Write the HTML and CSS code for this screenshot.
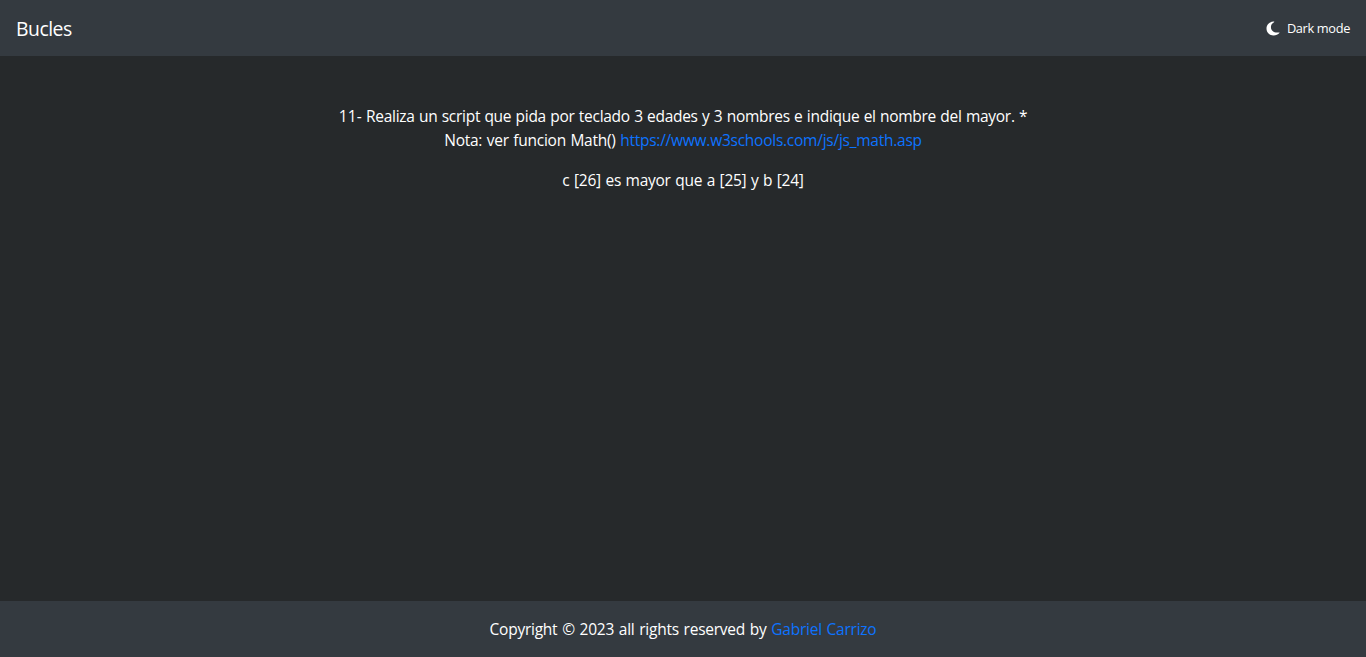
FILE: index.html
```html
<!DOCTYPE html>
<html lang="es">
<head>
<meta charset="utf-8">
<title>Bucles</title>
<link rel="stylesheet" href="styles.css">
</head>
<body>
<nav class="navbar">
  <a class="brand">Bucles</a>
  <button class="mode" type="button">
    <svg class="moon" viewBox="0 0 14 15" aria-hidden="true"><path d="M7.600.4C3.300.7.500 3.700.500 7.500c0 4 3.200 7.100 7.200 7.100 2.300 0 4.300-.9 5.700-2.500.3-.4 0-.8-.5-.7-4.600.8-8-1.700-8-5.400C4.900 4 6 2.400 8 1.200c.5-.3.300-.8-.4-.8z"/></svg>
    <span>Dark mode</span>
  </button>
</nav>
<main class="content">
  <p class="line"><span class="statement"><span class="number">11-</span> Realiza un script que pida por teclado 3 edades y 3 nombres e indique el nombre del mayor. *</span><br>Nota: ver funcion Math() <a class="link">https://www.w3schools.com/js/js_math.asp</a></p>
  <p class="line">c [26] es mayor que a [25] y b [24]</p>
</main>
<footer class="footer">Copyright © 2023 all rights reserved by <a class="link">Gabriel Carrizo</a></footer>
</body>
</html>
```
FILE: styles.css
```css
* { box-sizing: border-box; }
body { margin: 0; height: 100vh; display: flex; flex-direction: column; background: #26292b; color: #fff; font: 15.5px/24px "Open Sans", "Noto Sans", sans-serif; letter-spacing: -0.25px; word-spacing: 0.75px; }
.navbar { height: 56px; padding: 0 16px; display: flex; align-items: center; justify-content: space-between; background: #343a40; }
.brand { padding-top: 2px; font-size: 19.4px; line-height: 30px; letter-spacing: -0.5px; }
.mode { display: flex; align-items: center; gap: 7px; padding: 0; border: 0; background: none; color: #fff; font: inherit; font-size: 12.8px; letter-spacing: -0.35px; }
.moon { width: 14px; height: 15px; fill: #fff; }
.content { flex: 1; padding-top: 48px; text-align: center; }
.line { margin: 0 0 16px; }
.statement { letter-spacing: -0.28px; word-spacing: 0.55px; }
.number { letter-spacing: 0.1px; }
.link { color: #0d73ff; }
.footer { height: 56px; padding: 16px; background: #343a40; text-align: center; word-spacing: 1px; }
```
